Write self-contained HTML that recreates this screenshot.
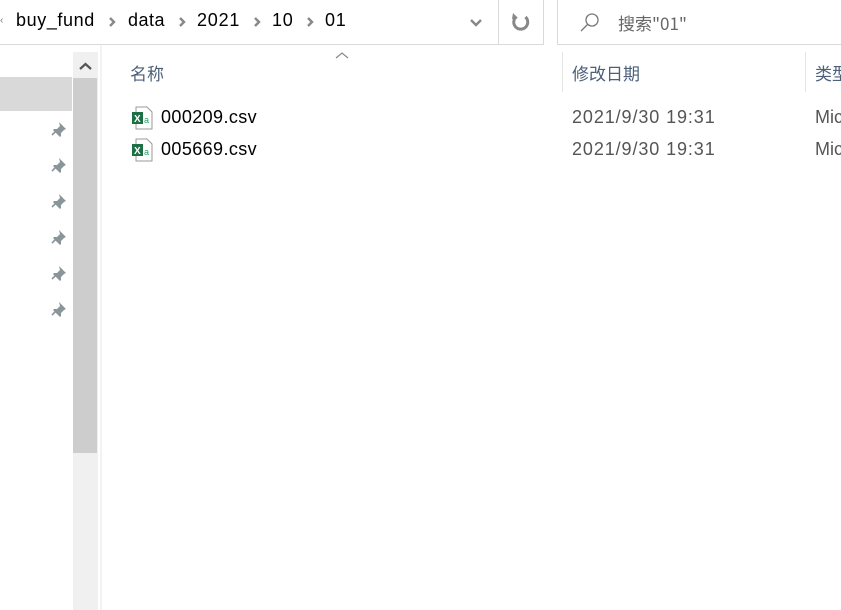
<!DOCTYPE html>
<html><head><meta charset="utf-8"><style>
*{margin:0;padding:0;box-sizing:border-box}
body{width:841px;height:610px;overflow:hidden;background:#fff;font-family:"Liberation Sans","Noto Sans CJK SC",sans-serif;position:relative;color:#000}
.a{position:absolute}
.t{font-size:18px;white-space:nowrap}
.cn{font-family:"Noto Sans CJK SC","Liberation Sans",sans-serif}
</style></head><body>
<!-- top bar -->
<div class="a" style="left:0;top:0;width:544px;height:45px;border-right:1px solid #d9d9d9;border-bottom:1px solid #d9d9d9"></div>
<div class="a" style="left:498px;top:0;width:1px;height:44px;background:#d9d9d9"></div>
<div class="a" style="left:557px;top:0;width:284px;height:45px;border-left:1px solid #d9d9d9;border-bottom:1px solid #d9d9d9"></div>
<div class="a" style="left:0;top:15px;font-size:10px;color:#777">&lsaquo;</div>
<div class="a t" style="left:16px;top:10px;letter-spacing:0.6px">buy_fund</div>
<div class="a t" style="left:128px;top:10px;letter-spacing:0.5px">data</div>
<div class="a t" style="left:197px;top:10px;letter-spacing:0.8px">2021</div>
<div class="a t" style="left:272px;top:10px;letter-spacing:0.8px">10</div>
<div class="a t" style="left:325px;top:10px;letter-spacing:0.8px">01</div>
<svg class="a" style="left:0;top:0" width="560" height="45">
<g fill="none" stroke="#888" stroke-width="2.4">
<path d="M110 18l4 4-4 4"/><path d="M180 18l4 4-4 4"/><path d="M255 18l4 4-4 4"/><path d="M308 18l4 4-4 4"/>
<path d="M471 20l5 5 5-5"/>
<path d="M525.5 17a7 7 0 1 1-9.5 0" stroke-width="3"/>
</g>
<path d="M513 13l5 5-6 1z" fill="#888"/>
</svg>
<svg class="a" style="left:578px;top:10px" width="24" height="24"><circle cx="14" cy="10" r="6" fill="none" stroke="#777" stroke-width="1.3"/><path d="M10 14l-7 7" stroke="#777" stroke-width="1.3"/></svg>
<div class="a t cn" style="left:618px;top:10px;color:#666;font-size:17px">搜索"01"</div>
<!-- sidebar -->
<div class="a" style="left:0;top:77px;width:72px;height:34px;background:#d9d9d9"></div>
<div class="a" style="left:73px;top:52px;width:25px;height:558px;background:#f0f0f0"></div>
<div class="a" style="left:73px;top:78px;width:24px;height:375px;background:#cdcdcd"></div>
<svg class="a" style="left:73px;top:52px" width="25" height="26"><path d="M7 17l5.5-5 5.5 5" fill="none" stroke="#555" stroke-width="2.2"/></svg>
<div class="a" style="left:100px;top:45px;width:2px;height:565px;background:#f3f3f3"></div>
<svg class="a" style="left:50px;top:120px" width="20" height="200">
<g fill="#8a949b" stroke="#8a949b">
<g id="p"><path d="M9 2l7 7-2 1-3 3 0 3-1 1-7-7 1-1 3 0 3-3z" stroke="none"/><path d="M6 11l-4 4" stroke-width="1.6"/></g>
<use href="#p" y="36"/><use href="#p" y="72"/><use href="#p" y="108"/><use href="#p" y="144"/><use href="#p" y="180"/>
</g></svg>
<!-- headers -->
<svg class="a" style="left:334px;top:50px" width="16" height="10"><path d="M2 8l6-5 6 5" fill="none" stroke="#888" stroke-width="1.2"/></svg>
<div class="a t cn" style="left:130px;top:60px;color:#4c607a;font-size:17px">名称</div>
<div class="a" style="left:562px;top:52px;width:1px;height:40px;background:#e5e5e5"></div>
<div class="a t cn" style="left:572px;top:60px;color:#4c607a;font-size:17px">修改日期</div>
<div class="a" style="left:805px;top:52px;width:1px;height:40px;background:#e5e5e5"></div>
<div class="a t cn" style="left:815px;top:60px;color:#4c607a;font-size:17px">类型</div>
<!-- files -->
<svg class="a" style="left:131px;top:106px" width="22" height="24"><path d="M5 1h11l5 5v17H5z" fill="#fff" stroke="#999"/><rect x="1" y="6" width="11" height="12" fill="#1d7044"/><text x="3" y="16" font-size="10" font-weight="bold" fill="#fff" font-family="Liberation Sans">X</text><text x="13" y="17" font-size="9" fill="#21a366" font-family="Liberation Sans">a</text></svg>
<svg class="a" style="left:131px;top:138px" width="22" height="24"><path d="M5 1h11l5 5v17H5z" fill="#fff" stroke="#999"/><rect x="1" y="6" width="11" height="12" fill="#1d7044"/><text x="3" y="16" font-size="10" font-weight="bold" fill="#fff" font-family="Liberation Sans">X</text><text x="13" y="17" font-size="9" fill="#21a366" font-family="Liberation Sans">a</text></svg>
<div class="a t" style="left:161px;top:107px;letter-spacing:0.4px">000209.csv</div>
<div class="a t" style="left:161px;top:139px;letter-spacing:0.4px">005669.csv</div>
<div class="a t" style="left:572px;top:107px;color:#555;letter-spacing:0.9px">2021/9/30 19:31</div>
<div class="a t" style="left:572px;top:139px;color:#555;letter-spacing:0.9px">2021/9/30 19:31</div>
<div class="a t" style="left:815px;top:107px;color:#555">Micro</div>
<div class="a t" style="left:815px;top:139px;color:#555">Micro</div>
</body></html>
